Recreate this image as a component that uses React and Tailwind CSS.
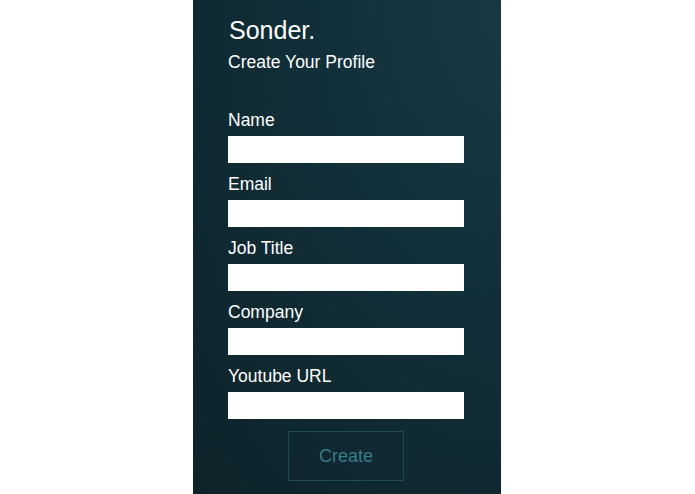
import React from "react";

const FIELDS = ["Name", "Email", "Job Title", "Company", "Youtube URL"];

const App = () => {
  return (
    <div className="w-[695px] h-[494px] bg-white overflow-hidden font-['Liberation_Sans',Arial,sans-serif]">
      <div className="ml-[193px] w-[308px] h-[494px] bg-[radial-gradient(ellipse_at_top_right,#183a45_0%,#12303a_40%,#0e2229_100%)] pl-[35px] pt-[16px]">
        {/* Header */}
        <div className="text-white text-[25px] leading-[29px] pl-[1px]">Sonder.</div>
        <div className="text-white text-[17.5px] leading-[20px] mt-[7px]">
          Create Your Profile
        </div>

        {/* Form */}
        <div className="mt-[38px] flex flex-col">
          {FIELDS.map((label) => (
            <div key={label} className="flex flex-col mb-[11px]">
              <label className="text-white text-[17.5px] leading-[20px]">
                {label}
              </label>
              <input
                type="text"
                className="mt-[6px] w-[236px] h-[27px] bg-white outline-none border-0 px-2 text-sm"
              />
            </div>
          ))}
        </div>

        <div className="w-[236px] flex justify-center mt-[1px]">
          <button className="w-[116px] h-[50px] border border-[#1f4854] text-[#3a7b8b] text-[18px] bg-transparent">
            Create
          </button>
        </div>
      </div>
    </div>
  );
};

export default App;
